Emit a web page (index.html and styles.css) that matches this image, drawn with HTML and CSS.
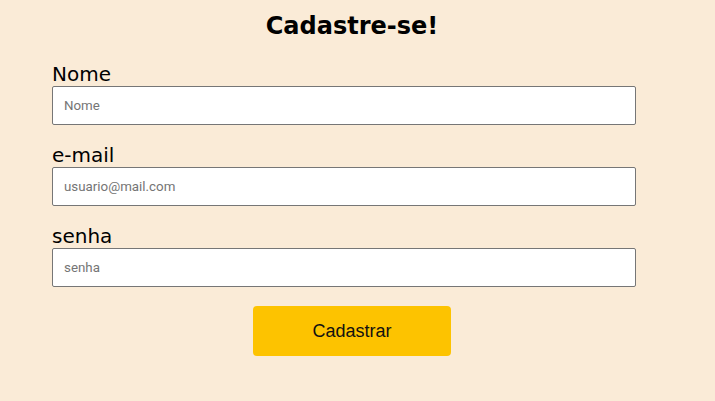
FILE: index.html
```html
<!DOCTYPE html>
<html lang="pt">
<head>
<meta charset="utf-8">
<title>Cadastre-se</title>
<link rel="stylesheet" href="styles.css">
</head>
<body>
<form class="form">
  <h1 class="title">Cadastre-se!</h1>
  <div class="field">
    <label class="label" for="nome">Nome</label>
    <input class="input" id="nome" type="text" placeholder="Nome">
  </div>
  <div class="field">
    <label class="label" for="email">e-mail</label>
    <input class="input" id="email" type="email" placeholder="usuario@mail.com">
  </div>
  <div class="field">
    <label class="label" for="senha">senha</label>
    <input class="input" id="senha" type="password" placeholder="senha">
  </div>
  <div class="actions">
    <button class="btn" type="button">Cadastrar</button>
  </div>
</form>
</body>
</html>
```

FILE: styles.css
```css
html, body {
  margin: 0;
  padding: 0;
  background: #faebd7;
}
body {
  font-family: "DejaVu Sans", Verdana, sans-serif;
  padding: 12px 0 0 52px;
}
.form {
  width: 600px;
  display: flex;
  flex-direction: column;
}
.title {
  margin: 0;
  text-align: center;
  font-size: 24px;
  line-height: 28px;
  font-weight: bold;
  color: #000;
  height: 51px;
}
.field {
  display: flex;
  flex-direction: column;
  margin-bottom: 19px;
}
.label {
  font-size: 20px;
  line-height: 23px;
  color: #000;
}
.input {
  box-sizing: border-box;
  width: 584px;
  height: 39px;
  margin: 0;
  border: 1px solid #767676;
  border-radius: 2px;
  background: #fff;
  padding: 0 11px;
  font-family: Roboto, "Liberation Sans", sans-serif;
  font-size: 13.333px;
  color: #000;
}
.input::placeholder {
  color: #757575;
}
.actions {
  display: flex;
  justify-content: center;
}
.btn {
  width: 198px;
  height: 50px;
  border: none;
  border-radius: 4px;
  background: #fdc300;
  font-family: "Liberation Sans", Arial, sans-serif;
  font-size: 18px;
  color: #111;
}
```
